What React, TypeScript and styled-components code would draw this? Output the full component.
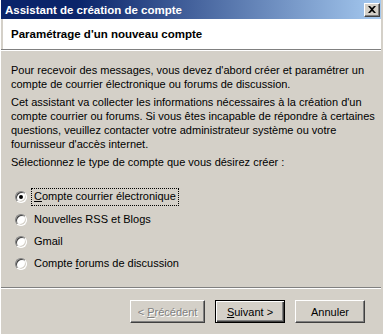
import React, { useState } from 'react'
import styled, { createGlobalStyle } from 'styled-components'

const GlobalStyle = createGlobalStyle`
  html, body {
    margin: 0;
    padding: 0;
    background: #d4d0c8;
  }
  * {
    box-sizing: border-box;
  }
`

const Window = styled.div`
  width: 383px;
  height: 334px;
  display: flex;
  flex-direction: column;
  background: #d4d0c8;
  border-left: 1px solid #ffffff;
  border-right: 2px solid #d4d0c8;
  font-family: Tahoma, "Liberation Sans", Arial, sans-serif;
  font-size: 11px;
  color: #000000;
  overflow: hidden;
`

const TitleBar = styled.div`
  height: 19px;
  flex-shrink: 0;
  display: flex;
  align-items: center;
  justify-content: space-between;
  padding: 0 3px 0 4px;
  margin-right: -2px;
  background: linear-gradient(90deg, #0a246a 0%, #0a246a 20%, #a6caf0 100%);
  color: #ffffff;
  font-weight: bold;
  font-size: 11.5px;
`

const CloseButton = styled.div`
  width: 16px;
  height: 14px;
  display: flex;
  align-items: center;
  justify-content: center;
  background: #d4d0c8;
  border-top: 1px solid #ffffff;
  border-left: 1px solid #ffffff;
  border-right: 1px solid #404040;
  border-bottom: 1px solid #404040;
  box-shadow: inset -1px -1px 0 #808080;
`

const Header = styled.div`
  height: 30px;
  flex-shrink: 0;
  display: flex;
  align-items: center;
  padding-left: 8px;
  margin-left: 2px;
  background: #ffffff;
  font-weight: bold;
  font-size: 11.5px;
`

const Separator = styled.div`
  flex-shrink: 0;
  height: 2px;
  border-top: 1px solid #808080;
  border-bottom: 1px solid #ffffff;
`

const Body = styled.div`
  flex: 1;
  padding: 12px 0 0 10px;
`

const Para = styled.p`
  margin: 0 0 4px 0;
  line-height: 14px;
  white-space: nowrap;
`

const RadioList = styled.div`
  display: flex;
  flex-direction: column;
  margin-top: 17px;
`

const RadioRow = styled.label`
  height: 22.4px;
  display: flex;
  align-items: center;
  padding-left: 4px;
  cursor: default;
`

const RadioCircle = styled.span<{ $checked: boolean }>`
  position: relative;
  width: 12px;
  height: 12px;
  border-radius: 50%;
  background: #ffffff;
  border: 1px solid;
  border-color: #808080 #ffffff #ffffff #808080;
  box-shadow: inset 1px 1px 0 #404040, inset -1px -1px 0 #d4d0c8;
  flex-shrink: 0;

  &::after {
    content: '';
    display: ${p => (p.$checked ? 'block' : 'none')};
    position: absolute;
    left: 3px;
    top: 3px;
    width: 4px;
    height: 4px;
    border-radius: 50%;
    background: #000000;
  }
`

const RadioLabel = styled.span<{ $focused: boolean }>`
  margin-left: 4px;
  padding: 1px 2px 2px 2px;
  line-height: 13px;
  border: 1px dotted ${p => (p.$focused ? '#000000' : 'transparent')};
`

const Footer = styled.div`
  flex-shrink: 0;
  display: flex;
  flex-direction: column;
  height: 47px;
`

const ButtonRow = styled.div`
  display: flex;
  justify-content: flex-end;
  gap: 10px;
  padding: 11px 16px 0 0;
`

const Button = styled.button<{ $width: number; $default?: boolean }>`
  width: ${p => p.$width}px;
  height: 23px;
  padding: 0;
  font-family: inherit;
  font-size: 11px;
  color: #000000;
  background: #d4d0c8;
  border: 1px solid;
  border-color: ${p => (p.$default ? '#000000' : '#ffffff #404040 #404040 #ffffff')};
  box-shadow: ${p =>
    p.$default
      ? 'inset 1px 1px 0 #ffffff, inset -1px -1px 0 #404040, inset -2px -2px 0 #808080'
      : 'inset -1px -1px 0 #808080'};

  &:disabled {
    color: #808080;
    text-shadow: 1px 1px 0 #ffffff;
  }
`

const Mnemonic = styled.span`
  text-decoration: underline;
`

const accounts = [
  { id: 'mail', pre: '', key: 'C', post: 'ompte courrier électronique' },
  { id: 'rss', pre: 'Nouvelles RSS et Blogs', key: '', post: '' },
  { id: 'gmail', pre: 'Gmail', key: '', post: '' },
  { id: 'news', pre: 'Compte ', key: 'f', post: 'orums de discussion' },
]

export default function App() {
  const [selected, setSelected] = useState('mail')

  return (
    <>
      <GlobalStyle />
      <Window>
        <TitleBar>
          <span>Assistant de création de compte</span>
          <CloseButton>
            <svg width="8" height="7" viewBox="0 0 8 7">
              <path d="M0 0h2l2 2 2-2h2L5 3.5 8 7H6L4 5 2 7H0l3-3.5z" fill="#000" />
            </svg>
          </CloseButton>
        </TitleBar>
        <Header>Paramétrage d'un nouveau compte</Header>
        <Separator />
        <Body>
          <Para>
            Pour recevoir des messages, vous devez d'abord créer et paramétrer un
            <br />
            compte de courrier électronique ou forums de discussion.
          </Para>
          <Para>
            Cet assistant va collecter les informations nécessaires à la création d'un
            <br />
            compte courrier ou forums. Si vous êtes incapable de répondre à certaines
            <br />
            questions, veuillez contacter votre administrateur système ou votre
            <br />
            fournisseur d'accès internet.
          </Para>
          <Para>Sélectionnez le type de compte que vous désirez créer :</Para>
          <RadioList>
            {accounts.map(a => (
              <RadioRow key={a.id} onClick={() => setSelected(a.id)}>
                <RadioCircle $checked={selected === a.id} />
                <RadioLabel $focused={selected === a.id}>
                  {a.pre}
                  {a.key && <Mnemonic>{a.key}</Mnemonic>}
                  {a.post}
                </RadioLabel>
              </RadioRow>
            ))}
          </RadioList>
        </Body>
        <Footer>
          <Separator />
          <ButtonRow>
            <Button $width={75} disabled>
              &lt; <Mnemonic>P</Mnemonic>récédent
            </Button>
            <Button $width={70} $default>
              <Mnemonic>S</Mnemonic>uivant &gt;
            </Button>
            <Button $width={70}>Annuler</Button>
          </ButtonRow>
        </Footer>
      </Window>
    </>
  )
}
